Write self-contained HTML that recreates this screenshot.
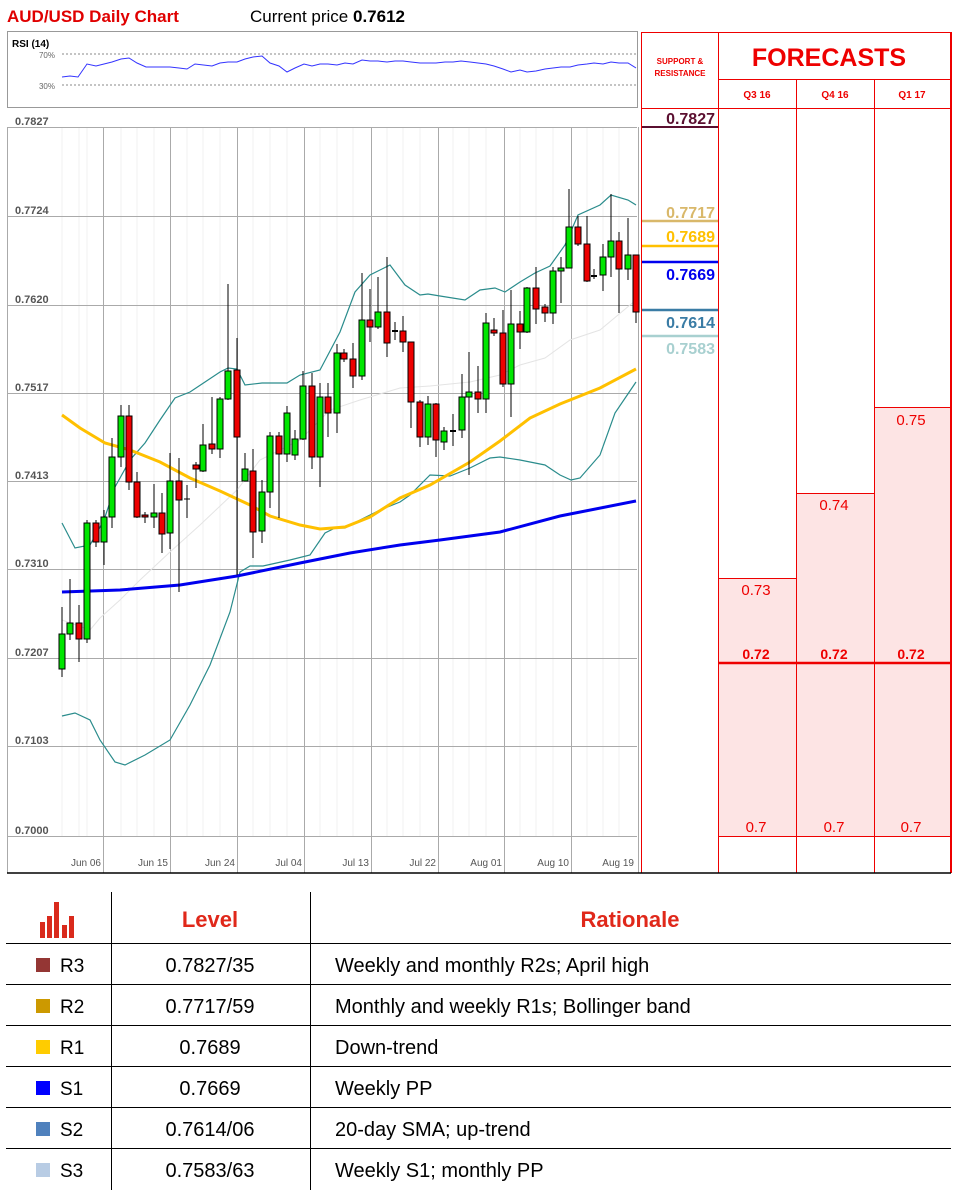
<!DOCTYPE html>
<html><head><meta charset="utf-8"><style>
html,body{margin:0;padding:0;background:#fff;}
svg{display:block;font-family:"Liberation Sans",sans-serif;}
</style></head><body>
<svg width="960" height="1192" viewBox="0 0 960 1192" xmlns="http://www.w3.org/2000/svg">
<text x="7" y="22" font-size="17" font-weight="bold" fill="#e00000">AUD/USD Daily Chart</text>
<text x="250" y="22" font-size="17" fill="#000">Current price <tspan font-weight="bold">0.7612</tspan></text>

<rect x="7.5" y="31.5" width="630" height="76" fill="#fff" stroke="#999"/>
<text x="12" y="47" font-size="10" font-weight="bold" fill="#000">RSI (14)</text>
<text x="55" y="58" font-size="8" fill="#666" text-anchor="end">70%</text>
<text x="55" y="89" font-size="8" fill="#666" text-anchor="end">30%</text>
<line x1="62" y1="54" x2="637" y2="54" stroke="#888" stroke-dasharray="2,2"/>
<line x1="62" y1="85" x2="637" y2="85" stroke="#888" stroke-dasharray="2,2"/>
<polyline fill="none" stroke="#3333ff" stroke-width="1" points="62,77 70,76 78,77 87,64 96,66 104,64 112,62 121,59 129,58 137,63 146,67 162,67 170,67 179,68 187,69 195,64 212,66 220,63 228,62 237,62 245,59 253,57 262,56 270,63 279,66 287,72 295,68 304,64 312,66 320,64 328,64 337,65 345,63 353,64 362,60 370,61 378,61 387,62 395,61 403,61 411,62 420,63 428,63 436,63 445,62 453,62 461,61 470,62 478,63 486,64 494,66 503,69 511,72 520,70 527,72 536,71 545,69 553,68 561,67 570,67 578,65 587,64 594,63 603,64 611,62 619,63 628,63 636,68"/>

<g stroke="#f0f0f0" stroke-width="1">
<line x1="62" y1="128" x2="62" y2="836"/><line x1="79" y1="128" x2="79" y2="836"/><line x1="87" y1="128" x2="87" y2="836"/><line x1="121" y1="128" x2="121" y2="836"/><line x1="137" y1="128" x2="137" y2="836"/><line x1="154" y1="128" x2="154" y2="836"/><line x1="187" y1="128" x2="187" y2="836"/><line x1="203" y1="128" x2="203" y2="836"/><line x1="220" y1="128" x2="220" y2="836"/><line x1="253" y1="128" x2="253" y2="836"/><line x1="270" y1="128" x2="270" y2="836"/><line x1="287" y1="128" x2="287" y2="836"/><line x1="320" y1="128" x2="320" y2="836"/><line x1="337" y1="128" x2="337" y2="836"/><line x1="353" y1="128" x2="353" y2="836"/><line x1="387" y1="128" x2="387" y2="836"/><line x1="403" y1="128" x2="403" y2="836"/><line x1="420" y1="128" x2="420" y2="836"/><line x1="453" y1="128" x2="453" y2="836"/><line x1="469" y1="128" x2="469" y2="836"/><line x1="486" y1="128" x2="486" y2="836"/><line x1="520" y1="128" x2="520" y2="836"/><line x1="536" y1="128" x2="536" y2="836"/><line x1="553" y1="128" x2="553" y2="836"/><line x1="587" y1="128" x2="587" y2="836"/><line x1="603" y1="128" x2="603" y2="836"/><line x1="619" y1="128" x2="619" y2="836"/>
</g>
<g stroke="#aaa" stroke-width="1">
<line x1="7" y1="127.5" x2="637" y2="127.5"/>
<line x1="7" y1="216.5" x2="637" y2="216.5"/>
<line x1="7" y1="305.5" x2="637" y2="305.5"/>
<line x1="7" y1="393.5" x2="637" y2="393.5"/>
<line x1="7" y1="481.5" x2="637" y2="481.5"/>
<line x1="7" y1="569.5" x2="637" y2="569.5"/>
<line x1="7" y1="658.5" x2="637" y2="658.5"/>
<line x1="7" y1="746.5" x2="637" y2="746.5"/>
<line x1="7" y1="836.5" x2="637" y2="836.5"/>
<line x1="7.5" y1="127" x2="7.5" y2="873"/>
<line x1="103.5" y1="127" x2="103.5" y2="873"/>
<line x1="170.5" y1="127" x2="170.5" y2="873"/>
<line x1="237.5" y1="127" x2="237.5" y2="873"/>
<line x1="304.5" y1="127" x2="304.5" y2="873"/>
<line x1="371.5" y1="127" x2="371.5" y2="873"/>
<line x1="438.5" y1="127" x2="438.5" y2="873"/>
<line x1="504.5" y1="127" x2="504.5" y2="873"/>
<line x1="571.5" y1="127" x2="571.5" y2="873"/>
<line x1="638.5" y1="127" x2="638.5" y2="873"/>
</g>
<g font-size="11" fill="#555" font-weight="bold">
<text x="15" y="125">0.7827</text><text x="15" y="214">0.7724</text><text x="15" y="303">0.7620</text><text x="15" y="391">0.7517</text><text x="15" y="479">0.7413</text><text x="15" y="567">0.7310</text><text x="15" y="656">0.7207</text><text x="15" y="744">0.7103</text><text x="15" y="834">0.7000</text>
</g>
<g font-size="10" fill="#555" text-anchor="end">
<text x="101" y="866">Jun 06</text><text x="168" y="866">Jun 15</text><text x="235" y="866">Jun 24</text><text x="302" y="866">Jul 04</text><text x="369" y="866">Jul 13</text><text x="436" y="866">Jul 22</text><text x="502" y="866">Aug 01</text><text x="569" y="866">Aug 10</text><text x="634" y="866">Aug 19</text>
</g>

<polyline fill="none" stroke="#e4e4e4" stroke-width="1" points="62,620 90,630 100,618 120,600 140,580 170,552 200,525 237,490 260,460 300,440 330,410 360,400 400,388 430,386 470,382 500,375 520,365 545,358 570,340 600,330 636,300"/>
<polyline fill="none" stroke="#2a8c8c" stroke-width="1.2" points="62,523 75,548 90,545 104,520 115,487 130,460 145,443 160,420 175,398 190,392 205,382 220,372 228,368 237,369 245,385 262,383 287,383 300,375 320,370 340,332 355,292 370,275 390,265 405,285 420,295 428,294 440,296 465,300 480,290 495,288 505,292 520,282 535,273 550,266 565,245 578,215 600,205 611,195 628,200 636,205"/>
<polyline fill="none" stroke="#2a8c8c" stroke-width="1.2" points="62,716 75,713 90,720 100,740 115,762 125,765 145,755 170,740 190,705 210,665 230,612 240,572 250,566 263,566 290,560 310,555 325,533 335,528 345,528 360,520 380,510 400,502 410,495 430,475 450,476 470,468 490,458 500,457 520,460 545,465 560,475 571,480 580,478 600,455 615,413 636,382"/>
<polyline fill="none" stroke="#0000ee" stroke-width="3" points="62,592 120,590 180,585 237,576 300,563 350,553 400,545 440,540 500,532 560,516 636,501"/>
<polyline fill="none" stroke="#ffc000" stroke-width="3" points="62,415 80,428 105,443 130,450 160,462 190,478 220,491 250,505 270,516 300,525 320,529 345,527 370,517 400,498 430,485 470,462 500,441 530,418 560,404 600,388 636,369"/>

<g stroke="#000" stroke-width="1">
<line x1="62" y1="607" x2="62" y2="677"/><rect x="59" y="634" width="6" height="35" fill="#00e600"/>
<line x1="70" y1="579" x2="70" y2="640"/><rect x="67" y="623" width="6" height="11" fill="#00e600"/>
<line x1="79" y1="605" x2="79" y2="662"/><rect x="76" y="623" width="6" height="16" fill="#ee0000"/>
<line x1="87" y1="520" x2="87" y2="643"/><rect x="84" y="523" width="6" height="116" fill="#00e600"/>
<line x1="96" y1="520" x2="96" y2="547"/><rect x="93" y="523" width="6" height="19" fill="#ee0000"/>
<line x1="104" y1="510" x2="104" y2="565"/><rect x="101" y="517" width="6" height="25" fill="#00e600"/>
<line x1="112" y1="438" x2="112" y2="528"/><rect x="109" y="457" width="6" height="60" fill="#00e600"/>
<line x1="121" y1="405" x2="121" y2="467"/><rect x="118" y="416" width="6" height="41" fill="#00e600"/>
<line x1="129" y1="405" x2="129" y2="490"/><rect x="126" y="416" width="6" height="66" fill="#ee0000"/>
<line x1="137" y1="472" x2="137" y2="518"/><rect x="134" y="482" width="6" height="35" fill="#ee0000"/>
<line x1="145" y1="512" x2="145" y2="523"/><rect x="142" y="515" width="6" height="2" fill="#ee0000"/>
<line x1="154" y1="484" x2="154" y2="528"/><rect x="151" y="513" width="6" height="4" fill="#00e600"/>
<line x1="162" y1="493" x2="162" y2="553"/><rect x="159" y="513" width="6" height="21" fill="#ee0000"/>
<line x1="170" y1="453" x2="170" y2="549"/><rect x="167" y="481" width="6" height="52" fill="#00e600"/>
<line x1="179" y1="458" x2="179" y2="592"/><rect x="176" y="481" width="6" height="19" fill="#ee0000"/>
<line x1="187" y1="485" x2="187" y2="518"/><line x1="184" y1="499" x2="190" y2="499"/>
<line x1="196" y1="462" x2="196" y2="488"/><rect x="193" y="465" width="6" height="4" fill="#ee0000"/>
<line x1="203" y1="424" x2="203" y2="472"/><rect x="200" y="445" width="6" height="26" fill="#00e600"/>
<line x1="212" y1="397" x2="212" y2="454"/><rect x="209" y="444" width="6" height="5" fill="#ee0000"/>
<line x1="220" y1="397" x2="220" y2="458"/><rect x="217" y="399" width="6" height="50" fill="#00e600"/>
<line x1="228" y1="284" x2="228" y2="400"/><rect x="225" y="371" width="6" height="28" fill="#00e600"/>
<line x1="237" y1="338" x2="237" y2="575"/><rect x="234" y="370" width="6" height="67" fill="#ee0000"/>
<line x1="245" y1="453" x2="245" y2="481"/><rect x="242" y="469" width="6" height="12" fill="#00e600"/>
<line x1="253" y1="449" x2="253" y2="558"/><rect x="250" y="471" width="6" height="61" fill="#ee0000"/>
<line x1="262" y1="480" x2="262" y2="543"/><rect x="259" y="492" width="6" height="39" fill="#00e600"/>
<line x1="270" y1="432" x2="270" y2="508"/><rect x="267" y="436" width="6" height="56" fill="#00e600"/>
<line x1="279" y1="432" x2="279" y2="518"/><rect x="276" y="436" width="6" height="18" fill="#ee0000"/>
<line x1="287" y1="406" x2="287" y2="462"/><rect x="284" y="413" width="6" height="41" fill="#00e600"/>
<line x1="295" y1="430" x2="295" y2="460"/><rect x="292" y="439" width="6" height="16" fill="#00e600"/>
<line x1="303" y1="371" x2="303" y2="440"/><rect x="300" y="386" width="6" height="53" fill="#00e600"/>
<line x1="312" y1="373" x2="312" y2="469"/><rect x="309" y="386" width="6" height="71" fill="#ee0000"/>
<line x1="320" y1="383" x2="320" y2="487"/><rect x="317" y="397" width="6" height="60" fill="#00e600"/>
<line x1="328" y1="383" x2="328" y2="437"/><rect x="325" y="397" width="6" height="16" fill="#ee0000"/>
<line x1="337" y1="344" x2="337" y2="433"/><rect x="334" y="353" width="6" height="60" fill="#00e600"/>
<line x1="344" y1="349" x2="344" y2="362"/><rect x="341" y="353" width="6" height="6" fill="#ee0000"/>
<line x1="353" y1="343" x2="353" y2="388"/><rect x="350" y="359" width="6" height="17" fill="#ee0000"/>
<line x1="362" y1="273" x2="362" y2="380"/><rect x="359" y="320" width="6" height="56" fill="#00e600"/>
<line x1="370" y1="289" x2="370" y2="342"/><rect x="367" y="320" width="6" height="7" fill="#ee0000"/>
<line x1="378" y1="277" x2="378" y2="329"/><rect x="375" y="312" width="6" height="15" fill="#00e600"/>
<line x1="387" y1="257" x2="387" y2="357"/><rect x="384" y="312" width="6" height="31" fill="#ee0000"/>
<line x1="395" y1="322" x2="395" y2="340"/><line x1="392" y1="331" x2="398" y2="331" stroke-width="2"/>
<line x1="403" y1="316" x2="403" y2="352"/><rect x="400" y="331" width="6" height="11" fill="#ee0000"/>
<line x1="411" y1="342" x2="411" y2="428"/><rect x="408" y="342" width="6" height="60" fill="#ee0000"/>
<line x1="420" y1="400" x2="420" y2="447"/><rect x="417" y="402" width="6" height="35" fill="#ee0000"/>
<line x1="428" y1="396" x2="428" y2="445"/><rect x="425" y="404" width="6" height="33" fill="#00e600"/>
<line x1="436" y1="403" x2="436" y2="457"/><rect x="433" y="404" width="6" height="36" fill="#ee0000"/>
<line x1="444" y1="427" x2="444" y2="450"/><rect x="441" y="431" width="6" height="11" fill="#00e600"/>
<line x1="453" y1="414" x2="453" y2="446"/><line x1="450" y1="431" x2="456" y2="431" stroke-width="2"/>
<line x1="462" y1="374" x2="462" y2="438"/><rect x="459" y="397" width="6" height="33" fill="#00e600"/>
<line x1="469" y1="352" x2="469" y2="475"/><rect x="466" y="392" width="6" height="5" fill="#00e600"/>
<line x1="478" y1="366" x2="478" y2="413"/><rect x="475" y="392" width="6" height="7" fill="#ee0000"/>
<line x1="486" y1="313" x2="486" y2="413"/><rect x="483" y="323" width="6" height="76" fill="#00e600"/>
<line x1="494" y1="318" x2="494" y2="336"/><rect x="491" y="330" width="6" height="3" fill="#ee0000"/>
<line x1="503" y1="310" x2="503" y2="387"/><rect x="500" y="333" width="6" height="51" fill="#ee0000"/>
<line x1="511" y1="290" x2="511" y2="417"/><rect x="508" y="324" width="6" height="60" fill="#00e600"/>
<line x1="520" y1="311" x2="520" y2="349"/><rect x="517" y="324" width="6" height="8" fill="#ee0000"/>
<line x1="527" y1="287" x2="527" y2="333"/><rect x="524" y="288" width="6" height="44" fill="#00e600"/>
<line x1="536" y1="267" x2="536" y2="324"/><rect x="533" y="288" width="6" height="21" fill="#ee0000"/>
<line x1="545" y1="304" x2="545" y2="322"/><rect x="542" y="307" width="6" height="6" fill="#ee0000"/>
<line x1="553" y1="267" x2="553" y2="324"/><rect x="550" y="271" width="6" height="42" fill="#00e600"/>
<line x1="561" y1="257" x2="561" y2="303"/><rect x="558" y="268" width="6" height="3" fill="#00e600"/>
<line x1="569" y1="189" x2="569" y2="268"/><rect x="566" y="227" width="6" height="41" fill="#00e600"/>
<line x1="578" y1="216" x2="578" y2="246"/><rect x="575" y="227" width="6" height="17" fill="#ee0000"/>
<line x1="587" y1="216" x2="587" y2="282"/><rect x="584" y="244" width="6" height="37" fill="#ee0000"/>
<line x1="594" y1="269" x2="594" y2="279"/><line x1="591" y1="276" x2="597" y2="276" stroke-width="2"/>
<line x1="603" y1="244" x2="603" y2="291"/><rect x="600" y="257" width="6" height="18" fill="#00e600"/>
<line x1="611" y1="194" x2="611" y2="277"/><rect x="608" y="241" width="6" height="16" fill="#00e600"/>
<line x1="619" y1="232" x2="619" y2="313"/><rect x="616" y="241" width="6" height="28" fill="#ee0000"/>
<line x1="628" y1="218" x2="628" y2="280"/><rect x="625" y="255" width="6" height="14" fill="#00e600"/>
<line x1="636" y1="255" x2="636" y2="323"/><rect x="633" y="255" width="6" height="57" fill="#ee0000"/>
</g>

<rect x="719" y="578" width="77" height="258" fill="#fde4e4"/>
<rect x="796" y="493" width="78" height="343" fill="#fde4e4"/>
<rect x="874" y="407" width="77" height="429" fill="#fde4e4"/>
<g stroke="#ee0000" stroke-width="1" fill="none">
<line x1="641.5" y1="32" x2="641.5" y2="873"/>
<line x1="718.5" y1="32" x2="718.5" y2="873"/>
<line x1="796.5" y1="79" x2="796.5" y2="873"/>
<line x1="874.5" y1="79" x2="874.5" y2="873"/>
<line x1="951" y1="32" x2="951" y2="873" stroke-width="2"/>
<line x1="641" y1="32.5" x2="951" y2="32.5"/>
<line x1="718" y1="79.5" x2="951" y2="79.5"/>
<line x1="641" y1="108.5" x2="951" y2="108.5"/>
<line x1="718" y1="578.5" x2="796" y2="578.5"/>
<line x1="796" y1="493.5" x2="874" y2="493.5"/>
<line x1="874" y1="407.5" x2="951" y2="407.5"/>
<line x1="718" y1="836.5" x2="951" y2="836.5"/>
<line x1="718" y1="663" x2="951" y2="663" stroke-width="2.5"/>
</g>
<text x="680" y="64" font-size="8" font-weight="bold" fill="#ee0000" text-anchor="middle">SUPPORT &amp;</text>
<text x="680" y="76" font-size="8" font-weight="bold" fill="#ee0000" text-anchor="middle">RESISTANCE</text>
<text x="829" y="66" font-size="25" font-weight="bold" fill="#ee0000" text-anchor="middle">FORECASTS</text>
<g font-size="10" font-weight="bold" fill="#ee0000" text-anchor="middle">
<text x="757" y="98">Q3 16</text><text x="835" y="98">Q4 16</text><text x="912" y="98">Q1 17</text>
</g>
<g font-size="15" fill="#ee0000" text-anchor="middle">
<text x="756" y="595">0.73</text><text x="834" y="510">0.74</text><text x="911" y="425">0.75</text>
<text x="756" y="832">0.7</text><text x="834" y="832">0.7</text><text x="911" y="832">0.7</text>
</g>
<g font-size="14" font-weight="bold" fill="#ee0000" text-anchor="middle">
<text x="756" y="659">0.72</text><text x="834" y="659">0.72</text><text x="911" y="659">0.72</text>
</g>
<g font-size="16" font-weight="bold" text-anchor="end">
<text x="715" y="124" fill="#5a0f30">0.7827</text>
<text x="715" y="218" fill="#d9b86a">0.7717</text>
<text x="715" y="242" fill="#ffc000">0.7689</text>
<text x="715" y="280" fill="#0000ee">0.7669</text>
<text x="715" y="328" fill="#3a7ca5">0.7614</text>
<text x="715" y="354" fill="#a8d0d0">0.7583</text>
</g>
<line x1="642" y1="127" x2="718" y2="127" stroke="#5a0f30" stroke-width="2"/>
<line x1="642" y1="221" x2="718" y2="221" stroke="#d9b86a" stroke-width="2.5"/>
<line x1="642" y1="246" x2="718" y2="246" stroke="#ffc000" stroke-width="2.5"/>
<line x1="642" y1="262" x2="718" y2="262" stroke="#0000ee" stroke-width="2.5"/>
<line x1="642" y1="310" x2="718" y2="310" stroke="#3a7ca5" stroke-width="2.5"/>
<line x1="642" y1="336" x2="718" y2="336" stroke="#a8d0d0" stroke-width="2.5"/>

<line x1="7" y1="873" x2="951" y2="873" stroke="#000" stroke-width="1.5"/>

<g fill="#d92a1c">
<rect x="40" y="922" width="5" height="16"/><rect x="47" y="916" width="5" height="22"/><rect x="54" y="902" width="5" height="36"/><rect x="62" y="925" width="5" height="13"/><rect x="69" y="916" width="5" height="22"/>
</g>
<text x="210" y="927" font-size="22" font-weight="bold" fill="#e0281a" text-anchor="middle">Level</text>
<text x="630" y="927" font-size="22" font-weight="bold" fill="#e0281a" text-anchor="middle">Rationale</text>
<g stroke="#000" stroke-width="1">
<line x1="111.5" y1="892" x2="111.5" y2="1190"/>
<line x1="310.5" y1="892" x2="310.5" y2="1190"/>
<line x1="6" y1="943.5" x2="951" y2="943.5"/>
<line x1="6" y1="984.5" x2="951" y2="984.5"/>
<line x1="6" y1="1025.5" x2="951" y2="1025.5"/>
<line x1="6" y1="1066.5" x2="951" y2="1066.5"/>
<line x1="6" y1="1107.5" x2="951" y2="1107.5"/>
<line x1="6" y1="1148.5" x2="951" y2="1148.5"/>
</g>
<rect x="36" y="958" width="14" height="14" fill="#943634"/>
<rect x="36" y="999" width="14" height="14" fill="#cc9900"/>
<rect x="36" y="1040" width="14" height="14" fill="#ffcc00"/>
<rect x="36" y="1081" width="14" height="14" fill="#0000ff"/>
<rect x="36" y="1122" width="14" height="14" fill="#4f81bd"/>
<rect x="36" y="1163" width="14" height="14" fill="#b8cce4"/>
<g font-size="19" fill="#000">
<text x="60" y="972">R3</text><text x="60" y="1013">R2</text><text x="60" y="1054">R1</text><text x="60" y="1095">S1</text><text x="60" y="1136">S2</text><text x="60" y="1177">S3</text>
</g>
<g font-size="20" fill="#000" text-anchor="middle">
<text x="210" y="972">0.7827/35</text><text x="210" y="1013">0.7717/59</text><text x="210" y="1054">0.7689</text><text x="210" y="1095">0.7669</text><text x="210" y="1136">0.7614/06</text><text x="210" y="1177">0.7583/63</text>
</g>
<g font-size="20" fill="#000">
<text x="335" y="972">Weekly and monthly R2s; April high</text>
<text x="335" y="1013">Monthly and weekly R1s; Bollinger band</text>
<text x="335" y="1054">Down-trend</text>
<text x="335" y="1095">Weekly PP</text>
<text x="335" y="1136">20-day SMA; up-trend</text>
<text x="335" y="1177">Weekly S1; monthly PP</text>
</g>
</svg>
</body></html>
